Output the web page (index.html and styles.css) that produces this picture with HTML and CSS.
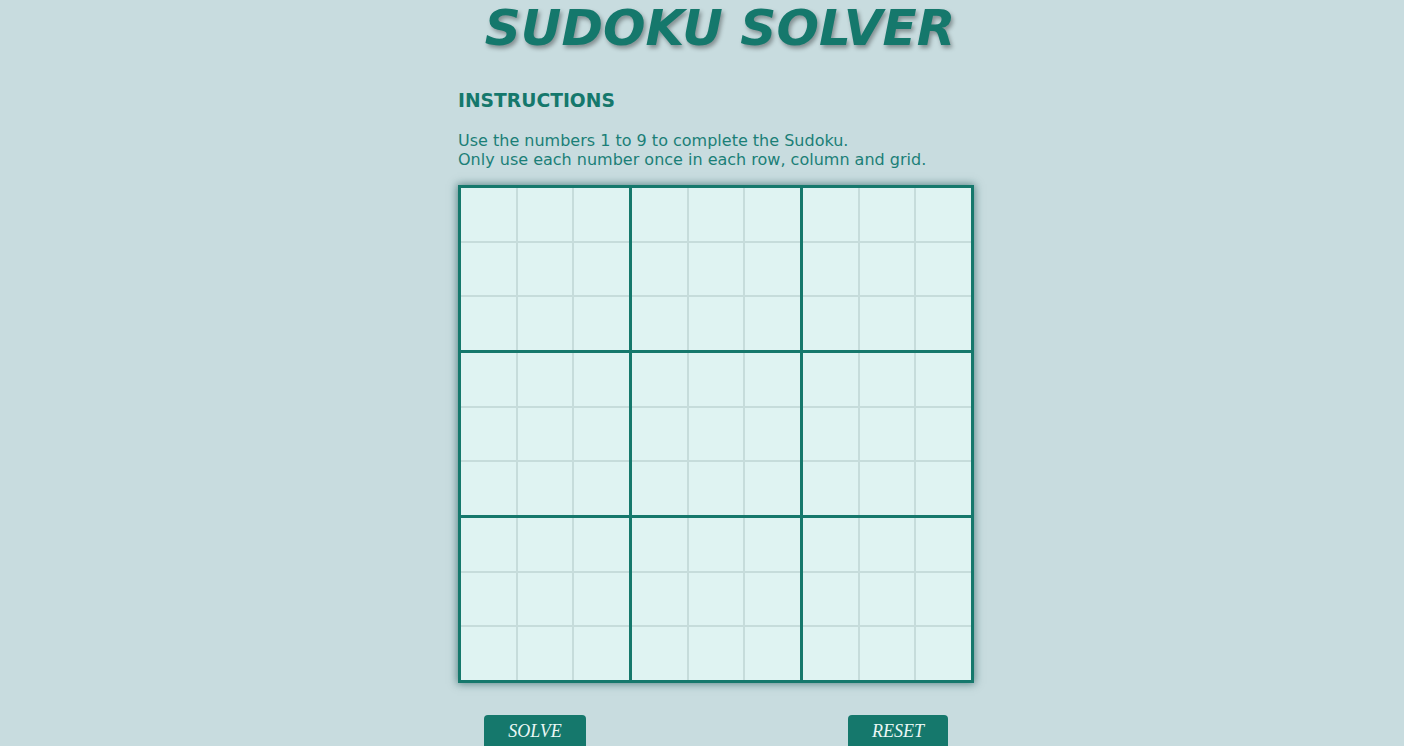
FILE: index.html
```html
<!DOCTYPE html>
<html lang="en">
<head>
<meta charset="utf-8">
<title>Sudoku Solver</title>
<link rel="stylesheet" href="styles.css">
</head>
<body>
<div class="wrap">
  <h1 class="title">SUDOKU SOLVER</h1>
  <h3 class="instr-head">INSTRUCTIONS</h3>
  <p class="instr-text">Use the numbers 1 to 9 to complete the Sudoku.<br>Only use each number once in each row, column and grid.</p>
  <div class="board">
    <div class="block"><div class="cell"></div><div class="cell"></div><div class="cell"></div><div class="cell"></div><div class="cell"></div><div class="cell"></div><div class="cell"></div><div class="cell"></div><div class="cell"></div></div>
    <div class="block"><div class="cell"></div><div class="cell"></div><div class="cell"></div><div class="cell"></div><div class="cell"></div><div class="cell"></div><div class="cell"></div><div class="cell"></div><div class="cell"></div></div>
    <div class="block"><div class="cell"></div><div class="cell"></div><div class="cell"></div><div class="cell"></div><div class="cell"></div><div class="cell"></div><div class="cell"></div><div class="cell"></div><div class="cell"></div></div>
    <div class="block"><div class="cell"></div><div class="cell"></div><div class="cell"></div><div class="cell"></div><div class="cell"></div><div class="cell"></div><div class="cell"></div><div class="cell"></div><div class="cell"></div></div>
    <div class="block"><div class="cell"></div><div class="cell"></div><div class="cell"></div><div class="cell"></div><div class="cell"></div><div class="cell"></div><div class="cell"></div><div class="cell"></div><div class="cell"></div></div>
    <div class="block"><div class="cell"></div><div class="cell"></div><div class="cell"></div><div class="cell"></div><div class="cell"></div><div class="cell"></div><div class="cell"></div><div class="cell"></div><div class="cell"></div></div>
    <div class="block"><div class="cell"></div><div class="cell"></div><div class="cell"></div><div class="cell"></div><div class="cell"></div><div class="cell"></div><div class="cell"></div><div class="cell"></div><div class="cell"></div></div>
    <div class="block"><div class="cell"></div><div class="cell"></div><div class="cell"></div><div class="cell"></div><div class="cell"></div><div class="cell"></div><div class="cell"></div><div class="cell"></div><div class="cell"></div></div>
    <div class="block"><div class="cell"></div><div class="cell"></div><div class="cell"></div><div class="cell"></div><div class="cell"></div><div class="cell"></div><div class="cell"></div><div class="cell"></div><div class="cell"></div></div>
  </div>
  <div class="actions">
    <button class="btn btn-solve">SOLVE</button>
    <button class="btn btn-reset">RESET</button>
  </div>
</div>
</body>
</html>
```
FILE: styles.css
```css
html, body {
  margin: 0;
  padding: 0;
  background: #c8dcdf;
  font-family: "DejaVu Sans", sans-serif;
  overflow: hidden;
}
.wrap {
  width: 516px;
  margin: 0 auto;
  padding-left: 28px;
}
.title {
  margin: 0;
  padding-left: 8px;
  font-size: 50px;
  font-weight: bold;
  font-style: italic;
  text-align: center;
  color: #15786c;
  line-height: 56px;
  text-shadow: 2px 3px 4px rgba(0, 0, 0, 0.35);
  white-space: nowrap;
}
.instr-head {
  margin: 34px 0 0;
  font-size: 18.72px;
  line-height: 22px;
  font-weight: bold;
  color: #15786c;
}
.instr-text {
  margin: 19px 0 0;
  font-size: 16px;
  line-height: 19px;
  color: #1b7f77;
}
.board {
  margin-top: 16px;
  width: 510px;
  height: 492px;
  border: 3px solid #15786c;
  background: #15786c;
  display: grid;
  grid-template-columns: repeat(3, 1fr);
  grid-template-rows: repeat(3, 1fr);
  gap: 3px;
  box-shadow: 0 0 8px 1px rgba(10, 70, 70, 0.55);
}
.block {
  background: #c6dcdb;
  display: grid;
  grid-template-columns: repeat(3, 1fr);
  grid-template-rows: repeat(3, 1fr);
  gap: 2px;
}
.cell {
  background: #dff3f2;
}
.actions {
  display: flex;
  justify-content: space-between;
  padding: 0 26px;
  margin-top: 32px;
}
.btn {
  height: 36px;
  border: none;
  border-radius: 4px;
  background: #15786c;
  color: #eaf7f5;
  font-family: "Liberation Serif", serif;
  font-style: italic;
  font-size: 18px;
  padding: 0 0 4px;
}
.btn-solve {
  width: 102px;
}
.btn-reset {
  width: 100px;
}
```
